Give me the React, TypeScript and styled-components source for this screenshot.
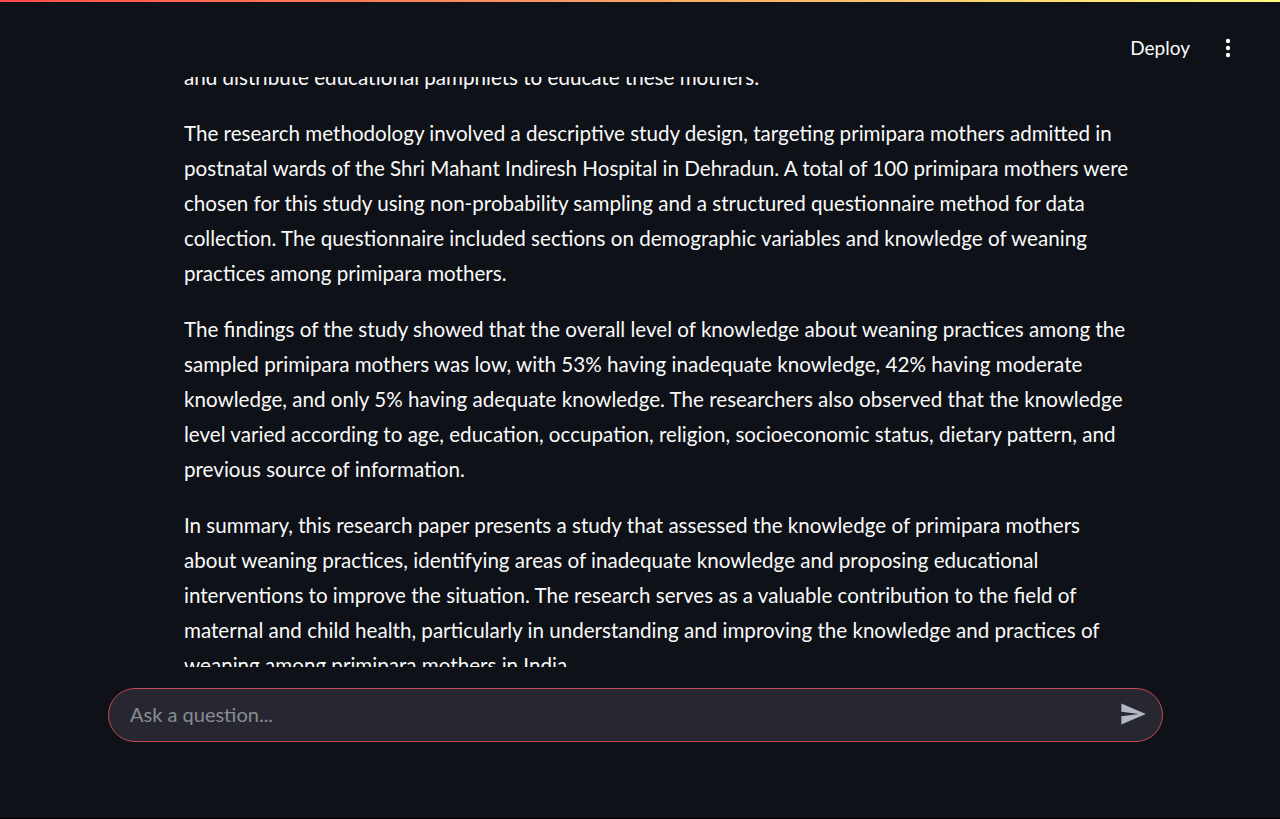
import React from "react";
import styled, { createGlobalStyle } from "styled-components";

const Global = createGlobalStyle`
  html, body { margin: 0; padding: 0; background: #0e1117; }
  body { font-family: Lato, "Noto Sans", sans-serif; color: #fafafa; overflow: hidden; }
  * { box-sizing: border-box; }
`;

const Page = styled.div`
  height: 819px;
  display: flex;
  flex-direction: column;
  background: #0e1117;
  border-bottom: 1px solid #000;
`;

const Decoration = styled.div`
  height: 2px;
  flex: none;
  background: linear-gradient(90deg, rgb(255, 75, 75), rgb(255, 253, 128));
`;

const Header = styled.header`
  height: 75px;
  flex: none;
  display: flex;
  align-items: flex-start;
  justify-content: flex-end;
  padding: 33px 42px 0 0;
  gap: 28px;
`;

const DeployButton = styled.button`
  background: none;
  border: none;
  color: #fafafa;
  font-family: inherit;
  font-size: 19px;
  padding: 0;
  line-height: 26px;
  cursor: pointer;
`;

const MenuButton = styled.button`
  background: none;
  border: none;
  padding: 0;
  width: 20px;
  height: 26px;
  display: flex;
  align-items: center;
  justify-content: center;
  color: #fafafa;
`;

const Content = styled.main`
  flex: none;
  height: 590px;
  overflow: hidden;
  padding-left: 184px;
`;

const Scroller = styled.div`
  margin-top: -17px;
`;

const Paragraph = styled.p`
  margin: 0 0 21px 0;
  font-size: 20.6px;
  line-height: 35px;
`;

const Line = styled.span`
  display: block;
  white-space: nowrap;
`;

const Footer = styled.div`
  flex: 1;
  padding: 21px 117px 0 108px;
`;

const ChatInput = styled.div`
  height: 54px;
  border: 1px solid #c24a54;
  border-radius: 27px;
  background: #262730;
  display: flex;
  align-items: center;
  padding: 0 14px 2px 21px;
`;

const Input = styled.input`
  flex: 1;
  background: transparent;
  border: none;
  outline: none;
  padding: 0;
  color: #fafafa;
  font-family: Lato, "Noto Sans", sans-serif;
  font-size: 20px;
  &::placeholder { color: #8a8c94; }
`;

const SendButton = styled.button`
  background: none;
  border: none;
  padding: 0;
  width: 30px;
  height: 30px;
  display: flex;
  align-items: center;
  justify-content: center;
`;

const paragraphs: string[][] = [
  ["and distribute educational pamphlets to educate these mothers."],
  [
    "The research methodology involved a descriptive study design, targeting primipara mothers admitted in",
    "postnatal wards of the Shri Mahant Indiresh Hospital in Dehradun. A total of 100 primipara mothers were",
    "chosen for this study using non-probability sampling and a structured questionnaire method for data",
    "collection. The questionnaire included sections on demographic variables and knowledge of weaning",
    "practices among primipara mothers.",
  ],
  [
    "The findings of the study showed that the overall level of knowledge about weaning practices among the",
    "sampled primipara mothers was low, with 53% having inadequate knowledge, 42% having moderate",
    "knowledge, and only 5% having adequate knowledge. The researchers also observed that the knowledge",
    "level varied according to age, education, occupation, religion, socioeconomic status, dietary pattern, and",
    "previous source of information.",
  ],
  [
    "In summary, this research paper presents a study that assessed the knowledge of primipara mothers",
    "about weaning practices, identifying areas of inadequate knowledge and proposing educational",
    "interventions to improve the situation. The research serves as a valuable contribution to the field of",
    "maternal and child health, particularly in understanding and improving the knowledge and practices of",
    "weaning among primipara mothers in India.",
  ],
];

export default function App() {
  return (
    <>
      <Global />
      <Page>
        <Decoration />
        <Header>
          <DeployButton>Deploy</DeployButton>
          <MenuButton aria-label="menu">
            <svg width="6" height="20" viewBox="0 0 6 20">
              <circle cx="3" cy="3" r="2.2" fill="#fafafa" />
              <circle cx="3" cy="10" r="2.2" fill="#fafafa" />
              <circle cx="3" cy="17" r="2.2" fill="#fafafa" />
            </svg>
          </MenuButton>
        </Header>
        <Content>
          <Scroller>
            {paragraphs.map((p, i) => (
              <Paragraph key={i}>
                {p.map((l, j) => (
                  <Line key={j}>{l}</Line>
                ))}
              </Paragraph>
            ))}
          </Scroller>
        </Content>
        <Footer>
          <ChatInput>
            <Input placeholder="Ask a question..." />
            <SendButton aria-label="send">
              <svg width="28" height="28" viewBox="0 0 24 24">
                <path d="M2.01 21L23 12 2.01 3 2 10l15 2-15 2z" fill="#b3b8c6" />
              </svg>
            </SendButton>
          </ChatInput>
        </Footer>
      </Page>
    </>
  );
}
